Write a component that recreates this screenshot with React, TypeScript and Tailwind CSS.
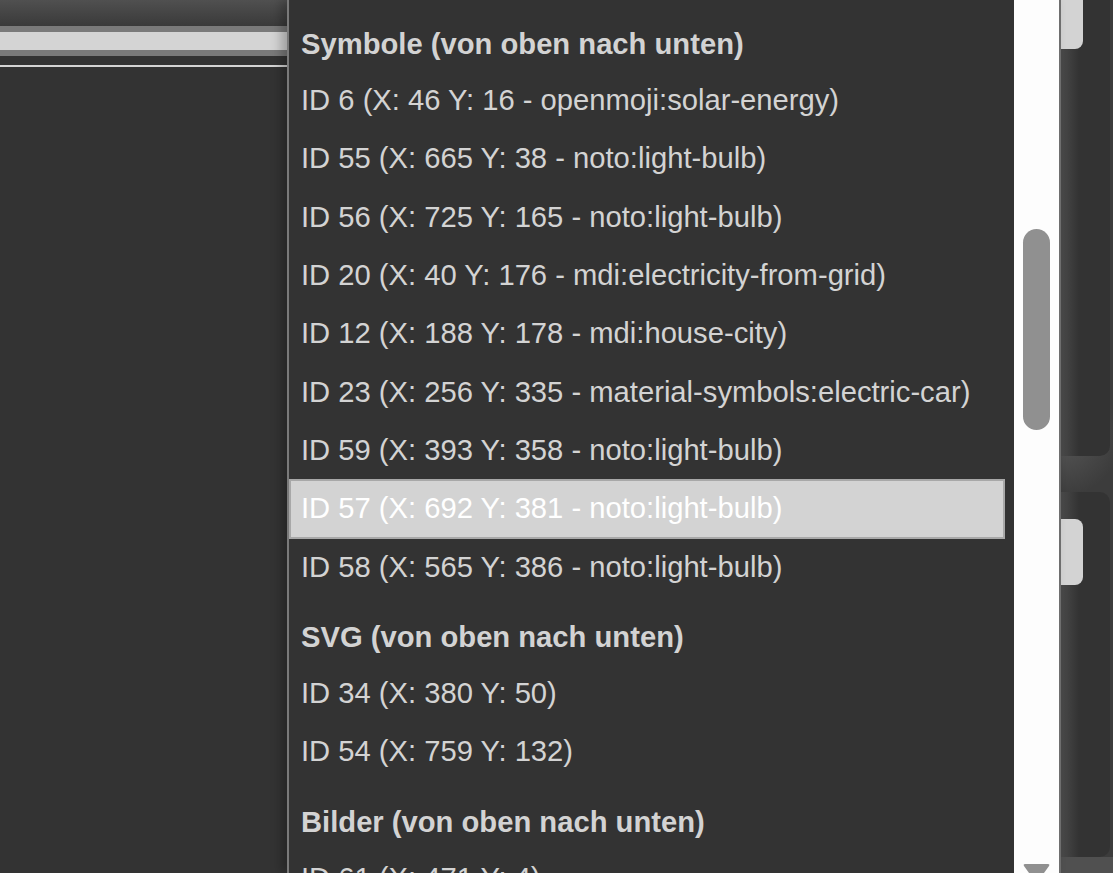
import React from "react";

type Entry = { kind: "group" | "item"; label: string; selected?: boolean };

const entries: Entry[] = [
  { kind: "group", label: "Symbole (von oben nach unten)" },
  { kind: "item", label: "ID 6 (X: 46 Y: 16 - openmoji:solar-energy)" },
  { kind: "item", label: "ID 55 (X: 665 Y: 38 - noto:light-bulb)" },
  { kind: "item", label: "ID 56 (X: 725 Y: 165 - noto:light-bulb)" },
  { kind: "item", label: "ID 20 (X: 40 Y: 176 - mdi:electricity-from-grid)" },
  { kind: "item", label: "ID 12 (X: 188 Y: 178 - mdi:house-city)" },
  { kind: "item", label: "ID 23 (X: 256 Y: 335 - material-symbols:electric-car)" },
  { kind: "item", label: "ID 59 (X: 393 Y: 358 - noto:light-bulb)" },
  { kind: "item", label: "ID 57 (X: 692 Y: 381 - noto:light-bulb)", selected: true },
  { kind: "item", label: "ID 58 (X: 565 Y: 386 - noto:light-bulb)" },
  { kind: "group", label: "SVG (von oben nach unten)" },
  { kind: "item", label: "ID 34 (X: 380 Y: 50)" },
  { kind: "item", label: "ID 54 (X: 759 Y: 132)" },
  { kind: "group", label: "Bilder (von oben nach unten)" },
  { kind: "item", label: "ID 61 (X: 471 Y: 4)" },
];

const Row: React.FC<{ entry: Entry; first: boolean }> = ({ entry, first }) => {
  if (entry.kind === "group") {
    return (
      <div
        className={`${first ? "mt-[17.5px]" : "mt-[14px]"} h-[54px] flex items-center pl-[12px] font-bold text-[#d3d3d3] whitespace-nowrap`}
      >
        {entry.label}
      </div>
    );
  }
  if (entry.selected) {
    return (
      <div className="h-[60px] -my-px flex items-center pl-[10px] border-2 border-[#a8a8a8] bg-[#d3d3d3] text-white whitespace-nowrap">
        {entry.label}
      </div>
    );
  }
  return (
    <div className="h-[58.4px] flex items-center pl-[12px] text-[#d3d3d3] whitespace-nowrap">
      {entry.label}
    </div>
  );
};

const App: React.FC = () => {
  return (
    <div className="h-[873px] w-full overflow-hidden flex bg-[#333] font-['Liberation_Sans',Arial,sans-serif]">
      {/* left panel */}
      <div className="w-[287px] shrink-0 flex flex-col">
        <div className="h-[26px] bg-gradient-to-b from-[#505050] to-[#3a3a3a]" />
        <div className="h-[30px] border-y-[6px] border-[#7a7a7a] bg-[#d4d4d4]" />
        <div className="h-[9px]" />
        <div className="h-[2px] bg-[#d4d4d4]" />
        <div className="flex-1" />
      </div>

      {/* dropdown list */}
      <div className="relative z-10 flex border-l-2 border-[#7a7a7a] shadow-[-6px_0_10px_rgba(0,0,0,0.25)]">
        <div className="w-[725px] pr-[9px] bg-[#333] text-[29.2px] overflow-hidden">
          {entries.map((e, i) => (
            <Row key={i} entry={e} first={i === 0} />
          ))}
        </div>
        <div className="w-[45px] bg-[#fdfdfd] flex flex-col items-center">
          <div className="mt-[229px] w-[27px] h-[201px] rounded-full bg-[#909090]" />
          <div className="flex-1" />
          <svg width="27" height="12" viewBox="0 0 27 12" className="mb-[-3px]">
            <path d="M2 0 H25 Q27 0 26 2 L21 9 H6 L1 2 Q0 0 2 0 Z" fill="#909090" />
          </svg>
        </div>
        <div className="w-[2px] bg-[#6e6e6e]" />
      </div>

      {/* right panels */}
      <div className="flex-1 flex flex-col bg-[radial-gradient(circle_at_0_50%,#575757,#3c3c3c_60px)]">
        <div className="h-[456px] w-[49px] rounded-br-[10px] bg-[linear-gradient(to_right,#4a4a4a,#333_18px)] flex flex-col">
          <div className="h-[49px] w-[22px] rounded-br-[8px] bg-[#d3d3d3]" />
        </div>
        <div className="h-[36px]" />
        <div className="h-[365px] w-[49px] rounded-r-[10px] bg-[linear-gradient(to_right,#4a4a4a,#333_18px)] flex flex-col">
          <div className="mt-[27px] h-[66px] w-[22px] rounded-r-[8px] bg-[#d3d3d3]" />
        </div>
        <div className="flex-1 bg-[#505050]" />
      </div>
    </div>
  );
};

export default App;
